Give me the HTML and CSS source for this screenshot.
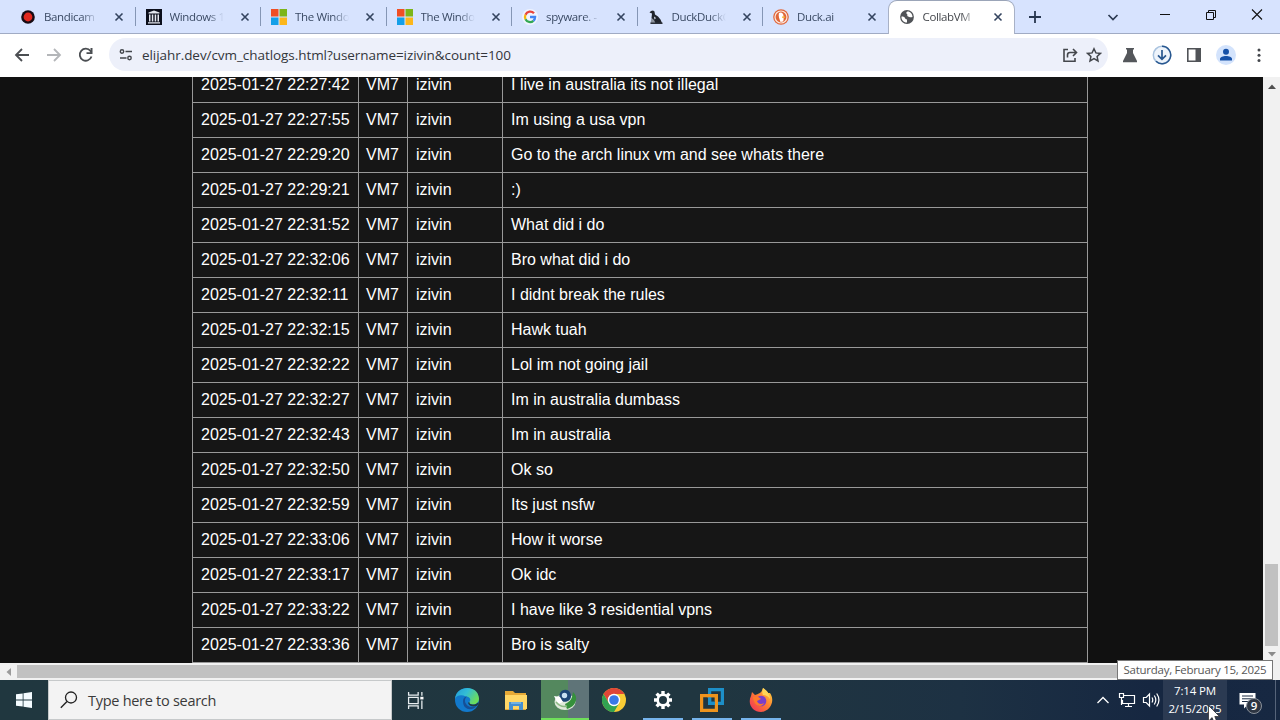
FILE: index.html
```
<!DOCTYPE html>
<html lang="en">
<head>
  <meta charset="UTF-8">
  <meta name="viewport" content="width=device-width, initial-scale=1.0">
  <title>CollabVM Chat Logs</title>
  <link rel="stylesheet" href="styles.css">
</head>
<body>
  <svg class="defs" width="0" height="0">
    <symbol id="close" viewBox="0 0 10 10"><path d="M1.5 1.5l7 7M8.5 1.5l-7 7" fill="none" stroke="currentColor" stroke-width="1.6"/></symbol>
    <symbol id="microsoft" viewBox="0 0 16 16"><path d="M0 0h7.5v7.5H0z" fill="#f04e23"/><path d="M8.5 0H16v7.5H8.5z" fill="#7cb518"/><path d="M0 8.5h7.5V16H0z" fill="#149fe8"/><path d="M8.5 8.5H16V16H8.5z" fill="#fcb61a"/></symbol>
  </svg>

  <header class="tabstrip">
    <div class="tab">
      <svg class="favicon" viewBox="0 0 16 16"><circle cx="8" cy="8" r="6.8" fill="#180c14"/><circle cx="8" cy="8" r="4.4" fill="#e3291f"/></svg>
      <span class="title">Bandicam</span><svg class="close"><use href="#close"/></svg>
    </div>
    <div class="tab">
      <svg class="favicon" viewBox="0 0 16 16"><path d="M0 0h16v16H0z" fill="#0c0f1c"/><path d="M8 1.5l5.500 2v1h-11v-1zM3 5.500h1.500v7H3zM5.800 5.500h1.500v7H5.800zM8.700 5.500h1.500v7H8.700zM11.500 5.500H13v7h-1.500zM2 13.300h12v1.300H2z" fill="#e4e8f0"/></svg>
      <span class="title">Windows 1</span><svg class="close"><use href="#close"/></svg>
    </div>
    <div class="tab">
      <svg class="favicon"><use href="#microsoft"/></svg>
      <span class="title">The Windo</span><svg class="close"><use href="#close"/></svg>
    </div>
    <div class="tab">
      <svg class="favicon"><use href="#microsoft"/></svg>
      <span class="title">The Windo</span><svg class="close"><use href="#close"/></svg>
    </div>
    <div class="tab">
      <svg class="favicon" viewBox="0 0 16 16"><circle cx="8" cy="8" r="8" fill="#fff" opacity=".6"/><g fill="none" stroke-width="2.300"><path d="M12 4.300A5.100 5.100 0 0 0 3.500 5.700" stroke="#e8453c"/><path d="M3.500 5.700a5.100 5.100 0 0 0 0 4.600" stroke="#f6b70c"/><path d="M3.500 10.300a5.100 5.100 0 0 0 7.900 1.500" stroke="#34a853"/><path d="M11.400 11.800A5.100 5.100 0 0 0 13.100 8H8" stroke="#4285f4"/></g></svg>
      <span class="title">spyware. -</span><svg class="close"><use href="#close"/></svg>
    </div>
    <div class="tab">
      <svg class="favicon" viewBox="0 0 16 16"><path d="M1.500 3.500L3 2l2-.500 1.500 1L7 5.500l3 2 2.500 3 1.500 3.500H7l-2-3-1.500-2 .500-4.500z" fill="#20242c"/><path d="M3.500 9l2.500 2 1.500 3.500h-5z" fill="#8d939e"/><path d="M6 7.500l2 1.500-1.500 1.500z" fill="#dde3f2"/><path d="M2.500 13.500h12V15h-12z" fill="#2b303a"/></svg>
      <span class="title">DuckDuckG</span><svg class="close"><use href="#close"/></svg>
    </div>
    <div class="tab no-sep">
      <svg class="favicon" viewBox="0 0 16 16"><circle cx="8" cy="8" r="7.800" fill="#e0663a"/><circle cx="8" cy="8" r="6" fill="none" stroke="#fbe6dc" stroke-width="1.200"/><path d="M6 4c2-1.500 4.500 0 4.500 3 0 2 .500 4-.500 5.500L7.500 13C6.500 10 5 7 6 4z" fill="#fff"/><path d="M9 7.500h3v1.300H9z" fill="#f7b52d"/></svg>
      <span class="title">Duck.ai</span><svg class="close"><use href="#close"/></svg>
    </div>
    <div class="tab active">
      <svg class="favicon" viewBox="0 0 16 16"><circle cx="8" cy="8" r="6.900" fill="#505357"/><path d="M2.500 7.500c2 0 3.500.500 4 2.500l1.500.500v3c-3 .300-6-2.500-5.500-6zM8.500 2.500c-1.500.500-1.500 2-.500 2.500s-.500 2 1 2.500 2 1 4.500.500c0-3-2-5.500-5-5.500z" fill="#fff"/></svg>
      <span class="title">CollabVM</span><svg class="close"><use href="#close"/></svg>
    </div>
    <svg class="new-tab" viewBox="0 0 12 12"><path d="M6 0v12M0 6h12" stroke="#27364f" stroke-width="1.800"/></svg>
    <div class="window-buttons">
      <svg viewBox="0 0 12 12"><path d="M1.500 4L6 8.500 10.500 4" fill="none" stroke="#2c3a52" stroke-width="1.700"/></svg>
      <svg viewBox="0 0 12 12"><path d="M1 5.500h10" stroke="#111"/></svg>
      <svg viewBox="0 0 12 12"><path d="M1.500 3.500h7v7h-7zM3.500 3.500v-2h7v7h-2" fill="none" stroke="#111"/></svg>
      <svg viewBox="0 0 12 12"><path d="M1 .500l10 10M11 .500l-10 10" stroke="#111" stroke-width="1.100"/></svg>
    </div>
  </header>

  <nav class="toolbar">
    <div class="nav-buttons">
      <svg viewBox="0 0 16 16"><path d="M15 8H2M8 2L2 8l6 6" fill="none" stroke="#4b4e52" stroke-width="1.800"/></svg>
      <svg viewBox="0 0 16 16"><path d="M1 8h13M8 2l6 6-6 6" fill="none" stroke="#b4b6b9" stroke-width="1.800"/></svg>
      <svg viewBox="0 0 16 16"><path d="M13.500 9.500A6 6 0 1 1 12.500 4l1 1.500" fill="none" stroke="#4b4e52" stroke-width="1.800"/><path d="M14.500 1v6h-6V5.200h4V1z" fill="#4b4e52"/></svg>
    </div>
    <div class="omnibox">
      <svg class="site-info" viewBox="0 0 14 14"><g fill="none" stroke="#44474c" stroke-width="1.400"><circle cx="3" cy="3.500" r="1.700"/><path d="M6.500 3.500H13M1 10h6.500"/><circle cx="10.500" cy="10" r="1.700"/></g></svg>
      <span class="url">elijahr.dev/cvm_chatlogs.html?username=izivin&amp;count=100</span>
      <svg class="box-icon" viewBox="0 0 16 16"><path d="M6 2.500H2v11.700h11V11M5.500 10.500V8q0-2.500 2.500-2.500h6M11 2l3.500 3.500L11 9" fill="none" stroke="#44474c" stroke-width="1.600"/></svg>
      <svg class="box-icon" viewBox="0 0 16 16"><path d="M8 1.800l1.900 4.100 4.500.500-3.300 3.100.900 4.500-4-2.300L4 14l.900-4.500L1.600 6.400l4.500-.500z" fill="none" stroke="#44474c" stroke-width="1.500"/></svg>
    </div>
    <div class="actions">
      <svg viewBox="0 0 16 16"><path d="M4 1h8v1.500h-1V6l4 8v1.200H1V14l4-8V2.500H4z" fill="#54575b"/></svg>
      <svg class="download" viewBox="0 0 20 20"><circle cx="10" cy="10" r="8.700" fill="#eef4fb" stroke="#a9c3df" stroke-width="1.500"/><path d="M10 1.300a8.700 8.700 0 1 1-6 15" fill="none" stroke="#28578f" stroke-width="1.500"/><path d="M10 5v9M6 10.300l4 4 4-4" fill="none" stroke="#28578f" stroke-width="1.700"/></svg>
      <svg viewBox="0 0 16 16"><path d="M1.800 1.800h12.400v12.400H1.800z" fill="none" stroke="#505357" stroke-width="1.600"/><path d="M9.500 2H14v12H9.500z" fill="#505357"/></svg>
      <svg class="avatar" viewBox="0 0 20 20"><circle cx="10" cy="10" r="10" fill="#d3e3fc"/><circle cx="10" cy="6.700" r="3" fill="#1450a8"/><path d="M4 15.500v-1.500c0-4 12-4 12 0v1.500z" fill="#1450a8"/></svg>
      <svg viewBox="0 0 16 16"><g fill="#44474c"><circle cx="8" cy="3" r="1.500"/><circle cx="8" cy="8.200" r="1.500"/><circle cx="8" cy="13.400" r="1.500"/></g></svg>
    </div>
  </nav>

  <main class="viewport">
    <div class="page">
      <table>
        <colgroup><col class="col-time"><col class="col-vm"><col class="col-user"><col></colgroup>
        <tr><td>2025-01-27 22:27:42</td><td>VM7</td><td>izivin</td><td>I live in australia its not illegal</td></tr>
        <tr><td>2025-01-27 22:27:55</td><td>VM7</td><td>izivin</td><td>Im using a usa vpn</td></tr>
        <tr><td>2025-01-27 22:29:20</td><td>VM7</td><td>izivin</td><td>Go to the arch linux vm and see whats there</td></tr>
        <tr><td>2025-01-27 22:29:21</td><td>VM7</td><td>izivin</td><td>:)</td></tr>
        <tr><td>2025-01-27 22:31:52</td><td>VM7</td><td>izivin</td><td>What did i do</td></tr>
        <tr><td>2025-01-27 22:32:06</td><td>VM7</td><td>izivin</td><td>Bro what did i do</td></tr>
        <tr><td>2025-01-27 22:32:11</td><td>VM7</td><td>izivin</td><td>I didnt break the rules</td></tr>
        <tr><td>2025-01-27 22:32:15</td><td>VM7</td><td>izivin</td><td>Hawk tuah</td></tr>
        <tr><td>2025-01-27 22:32:22</td><td>VM7</td><td>izivin</td><td>Lol im not going jail</td></tr>
        <tr><td>2025-01-27 22:32:27</td><td>VM7</td><td>izivin</td><td>Im in australia dumbass</td></tr>
        <tr><td>2025-01-27 22:32:43</td><td>VM7</td><td>izivin</td><td>Im in australia</td></tr>
        <tr><td>2025-01-27 22:32:50</td><td>VM7</td><td>izivin</td><td>Ok so</td></tr>
        <tr><td>2025-01-27 22:32:59</td><td>VM7</td><td>izivin</td><td>Its just nsfw</td></tr>
        <tr><td>2025-01-27 22:33:06</td><td>VM7</td><td>izivin</td><td>How it worse</td></tr>
        <tr><td>2025-01-27 22:33:17</td><td>VM7</td><td>izivin</td><td>Ok idc</td></tr>
        <tr><td>2025-01-27 22:33:22</td><td>VM7</td><td>izivin</td><td>I have like 3 residential vpns</td></tr>
        <tr><td>2025-01-27 22:33:36</td><td>VM7</td><td>izivin</td><td>Bro is salty</td></tr>
      </table>
    </div>
    <div class="scroll-y">
      <svg viewBox="0 0 8 5"><path d="M0 5l4-4.500L8 5z" fill="#505050"/></svg>
      <div class="thumb-y"></div>
      <svg viewBox="0 0 8 5"><path d="M0 0h8L4 4.500z" fill="#8b8b8b"/></svg>
    </div>
  </main>
  <div class="scroll-x">
    <svg viewBox="0 0 5 8"><path d="M5 0v8L.500 4z" fill="#9b9b9b"/></svg>
    <div class="thumb-x"></div>
  </div>

  <footer class="taskbar">
    <div class="start">
      <svg viewBox="0 0 16 16"><path d="M0 2.300l6.700-.900v6.200H0zM7.500 1.300L16 0v7.600H7.500zM0 8.400h6.700v6.200L0 13.700zM7.500 8.400H16V16l-8.500-1.200z" fill="#f4fbff"/></svg>
    </div>
    <div class="search">
      <svg viewBox="0 0 18 18"><circle cx="11" cy="6.500" r="5.500" fill="none" stroke="#222" stroke-width="1.300"/><path d="M7 10.500L.800 16.700" stroke="#222" stroke-width="1.400"/></svg>
      <span>Type here to search</span>
    </div>
    <div class="apps">
      <div class="app task-view"><svg class="small" viewBox="0 0 16 16"><path d="M1.500 0v3h9V0M1.500 16v-3h9v3M1.500 5h9v6h-9zM14 0v3.500M14 8v8" fill="none" stroke="#e8eef0" stroke-width="1.200"/><path d="M12.500 4.500h3v2.500h-3z" fill="#fff"/></svg></div>
      <div class="app"><svg viewBox="0 0 24 24">
        <defs><linearGradient id="edge" x1="0" y1="0" x2="1" y2=".500"><stop offset="0" stop-color="#229bd9"/><stop offset=".5" stop-color="#33bdd5"/><stop offset="1" stop-color="#6cdc5b"/></linearGradient></defs>
        <circle cx="12" cy="12" r="12" fill="#1279cc"/>
        <path d="M0 11C1-3 23-4 24 10.500c0 4-3 6-6.500 6-3 0-4-1-3-2.500 2-3 0-5.500-3.500-5.500C5.500 6 1 8 0 11z" fill="url(#edge)"/>
        <path d="M8 13c0-3 2-4.500 4-4.500-4 2.500-2 10.500 5 10.500 2 0 3.500-.500 5-1.500-3 5-14 6-14-4.500z" fill="#164f96"/>
        <path d="M14.500 14c-.600 1.500 1 2.500 3.200 2.600 2.300 0 4-.700 5.500-2.300l.300 1.500-1.500 2c-3.500 1.500-8.500.500-9-3z" fill="#203745"/>
      </svg></div>
      <div class="app"><svg viewBox="0 0 24 24"><path d="M1 3h8l2 2h11v17H1z" fill="#e6a936"/><path d="M1 7h22v14H1z" fill="#ffd766"/><path d="M5 22v-8h14v8h-4v-4H9v4z" fill="#4690d0"/><path d="M7 15h10" stroke="#81bce8" stroke-width="1.500"/></svg></div>
      <div class="app current"><svg viewBox="0 0 24 24">
        <ellipse cx="12" cy="15" rx="10.500" ry="8" fill="#dfe9da"/><path d="M14 22c9-2 12-12 6-17-1 7-2 9-8 12z" fill="#35903b"/><path d="M7 6C10 1 17 2 18 8c1 6-7 9-10 5-2-2-2-5-1-7z" fill="#1e4676"/><circle cx="11.500" cy="8.500" r="2.700" fill="#c9e0f2"/><path d="M1 9l6 1 3 5-5 2z" fill="#fff"/><path d="M3 15q5 6 11 4" fill="none" stroke="#8cb984" stroke-width="1.500"/>
      </svg></div>
      <div class="app"><svg viewBox="0 0 24 24"><circle cx="12" cy="12" r="12" fill="#f9cc35"/><path d="M1.600 6A12 12 0 0 1 22.400 6H12l-5.200 9z" fill="#df4637"/><path d="M1.600 6A12 12 0 0 0 12 24l5.200-9-5.200 3-5.200-3z" fill="#31a352"/><circle cx="12" cy="12" r="6.200" fill="#fff"/><circle cx="12" cy="12" r="4.800" fill="#3978e7"/></svg></div>
      <div class="app open"><svg class="gear" viewBox="0 0 20 20"><circle cx="10" cy="10" r="5.300" fill="none" stroke="#fff" stroke-width="2.600"/><path d="M10 1v3M10 16v3M1 10h3M16 10h3M3.600 3.600l2.200 2.200M14.200 14.200l2.200 2.200M16.400 3.600l-2.200 2.200M5.800 14.200l-2.200 2.200" stroke="#fff" stroke-width="3.400"/></svg></div>
      <div class="app open"><svg viewBox="0 0 24 24"><g fill="none" stroke-width="3.200"><path d="M9.600 1.600h12.800v13.800H9.600z" stroke="#1d8fc8"/><path d="M1.600 7.600h14.800v14.800H1.600z" stroke="#ef941d"/><path d="M9.600 6v9.400H15" stroke="#1d8fc8"/><path d="M7 7.600h9.400V13" stroke="#ef941d"/></g></svg></div>
      <div class="app open"><svg viewBox="0 0 24 24">
        <defs><linearGradient id="fox" x1="1" y1="0" x2="0" y2="1"><stop offset="0" stop-color="#ffdf43"/><stop offset=".45" stop-color="#ff8030"/><stop offset="1" stop-color="#ef2b5c"/></linearGradient></defs>
        <path d="M3 4l3 3 3-1c2-1 4-2 5-6 2 2 4 3 5 5l2 0c6 9-1 19-9 19S-2 16 2 8z" fill="url(#fox)"/><circle cx="12" cy="13" r="5.300" fill="#7a3ecb"/><path d="M4 9c4-1 6 0 8 2l-4 2c1 3 4 4 7 2-2 5-10 4-11-6z" fill="#ff7a2b"/><path d="M14 0c3 2 7 5 7 11-2-3-4-4-7-4-1-2-1-4 0-7z" fill="#ffd557"/>
      </svg></div>
    </div>
    <div class="tray">
      <svg class="chevron" viewBox="0 0 14 14"><path d="M1.500 10L7 4.500l5.500 5.500" fill="none" stroke="#fff" stroke-width="1.300"/></svg>
      <svg class="network" viewBox="0 0 18 16"><path d="M6 3.500h10.500v8H4.500V8M10.500 11.500v3M7 14.500h7M1.500 1.500h4v4h-4zM3.500 5.500v7.500" fill="none" stroke="#fff" stroke-width="1.200"/></svg>
      <svg class="volume" viewBox="0 0 18 16"><path d="M1.500 5.500h2.700L7.500 2v12l-3.300-3.500H1.500zM10 5.500q1.500 2.500 0 5M12.300 3.500q3 4.500 0 9M14.700 1.500q4.500 6.500 0 13" fill="none" stroke="#fff" stroke-width="1.200"/></svg>
      <div class="clock"><span>7:14 PM</span><span>2/15/2025</span></div>
      <div class="notifications">
        <svg viewBox="0 0 17 17"><path d="M.500 1h16v11.500H9L5 16.500v-4H.500z" fill="#fff"/><path d="M3 4h11M3 6.800h11M3 9.500h7" stroke="#1a2b42" stroke-width="1"/></svg>
        <span class="badge">9</span>
      </div>
      <div class="show-desktop"></div>
    </div>
  </footer>

  <div class="tooltip">Saturday, February 15, 2025</div>
  <svg class="cursor" viewBox="0 0 12 19"><path d="M.500.500v15.500l3.600-3.400 2.300 5.500 2.600-1.100L6.800 11.500h4.700z" fill="#fff" stroke="#222" stroke-width=".7"/></svg>
</body>
</html>
```
FILE: styles.css
```
* {
  box-sizing: border-box;
}

body {
  margin: 0;
  width: 1280px;
  height: 720px;
  overflow: hidden;
  position: relative;
  display: flex;
  flex-direction: column;
  background: #111;
  font-family: "Open Sans", "Noto Sans", sans-serif;
}

svg {
  display: block;
  flex: none;
}

.defs {
  position: absolute;
}

/* tabs */
.tabstrip {
  display: flex;
  height: 34px;
  flex: none;
  padding-left: 10px;
  background: #d7e3fe;
  border-bottom: 1px solid #a0abc4;
}

.tab {
  display: flex;
  align-items: center;
  width: 125.5px;
  flex: none;
  height: 33px;
  padding: 0 10px;
  color: #3a4a64;
  background: linear-gradient(#8596b5, #8596b5) right 0 center / 1px 19px no-repeat;
}

.tab.no-sep {
  background: none;
}

.tab.active {
  height: 33px;
  margin-top: 1px;
  padding-bottom: 1px;
  background: #fff;
  color: #45484d;
  border-radius: 8px 8px 0 0;
  box-shadow: 0 -1px 0 #9ba5b8, 1px 0 0 #a8b1c6, -1px 0 0 #a8b1c6;
}

.favicon {
  width: 16px;
  height: 16px;
}

.title {
  width: 54px;
  margin: 0 0 1px 8px;
  white-space: nowrap;
  font-size: 11.5px;
  letter-spacing: -0.35px;
  -webkit-mask-image: linear-gradient(90deg, #000 70%, transparent);
  mask-image: linear-gradient(90deg, #000 70%, transparent);
}

.close {
  width: 10px;
  height: 10px;
  margin-left: 16px;
  color: #34445f;
}

.new-tab {
  width: 12px;
  height: 12px;
  margin: 11px 0 0 15px;
}

.window-buttons {
  display: flex;
  gap: 34px;
  margin: 9px 0 0 66px;
}

.window-buttons svg {
  width: 12px;
  height: 12px;
}

.window-buttons svg:first-child {
  margin: 2px 6px 0 0;
}

/* toolbar */
.toolbar {
  display: flex;
  align-items: center;
  height: 43px;
  flex: none;
  padding-bottom: 2px;
  background: #fff;
}

.nav-buttons {
  display: flex;
  gap: 16px;
  width: 109px;
  padding-left: 14px;
}

.nav-buttons svg,
.box-icon,
.actions svg {
  width: 16px;
  height: 16px;
}

.omnibox {
  display: flex;
  align-items: center;
  width: 999px;
  height: 33px;
  padding: 0 6px 0 10px;
  border-radius: 17px;
  background: #edf0fa;
}

.site-info {
  width: 14px;
  height: 14px;
}

.url {
  flex: 1;
  margin-left: 9px;
  font-size: 13.5px;
  letter-spacing: -0.06px;
  color: #33363b;
  white-space: nowrap;
}

.box-icon + .box-icon {
  margin-left: 8px;
}

.actions {
  display: flex;
  align-items: center;
  gap: 15px;
  padding-left: 14px;
}

.actions .download,
.actions .avatar {
  width: 20px;
  height: 20px;
}

.actions .download {
  margin: 0 -1px;
}

.actions svg:nth-child(3) {
  margin-right: -1px;
}

/* page */
.viewport {
  display: flex;
  height: 586px;
  flex: none;
}

.page {
  display: flex;
  flex-direction: column;
  justify-content: flex-end;
  width: 1263px;
  overflow: hidden;
  background: #111;
}

table {
  width: 896px;
  flex: none;
  margin-left: 192px;
  table-layout: fixed;
  border-collapse: collapse;
  background: #161616;
  color: #fff;
  font: 16px/18px "Liberation Sans", Arial, sans-serif;
}

td {
  height: 35px;
  padding: 8px;
  border: 1px solid #999;
  white-space: nowrap;
}

td:nth-child(2) {
  padding: 8px 7px;
}

.col-time {
  width: 166px;
}

.col-vm {
  width: 49px;
}

.col-user {
  width: 95px;
}

.scroll-y {
  display: flex;
  flex-direction: column;
  align-items: center;
  justify-content: flex-end;
  width: 17px;
  padding-bottom: 6px;
  background: #f1f1f1;
}

.scroll-y svg {
  width: 8px;
  height: 5px;
}

.scroll-y svg:first-child {
  margin-bottom: auto;
  margin-top: 7px;
}

.thumb-y {
  width: 13px;
  height: 82px;
  margin-bottom: 6px;
  background: #c1c1c1;
}

.scroll-x {
  display: flex;
  align-items: center;
  height: 17px;
  flex: none;
  padding: 0 0 0 6px;
  background: #f1f1f1;
}

.scroll-x svg {
  width: 5px;
  height: 8px;
}

.thumb-x {
  width: 1220px;
  height: 13px;
  margin-left: 6px;
  background: #c1c1c1;
}

/* taskbar */
.taskbar {
  display: flex;
  height: 40px;
  flex: none;
  background: linear-gradient(90deg, #20373f 0, #203640 55%, #1d3143 75%, #162741 90%, #172842 100%);
}

.start {
  display: flex;
  align-items: center;
  justify-content: center;
  width: 48px;
}

.start svg {
  width: 16px;
  height: 16px;
}

.search {
  display: flex;
  align-items: center;
  width: 344px;
  padding-left: 11px;
  background: #f3f3f3;
  border: 1px solid #c6c9ca;
  color: #3a3a3a;
  font-size: 14.5px;
  letter-spacing: -0.28px;
}

.search svg {
  width: 18px;
  height: 18px;
}

.search span {
  margin-left: 10px;
  white-space: nowrap;
}

.apps {
  display: flex;
  gap: 1px;
}

.app {
  display: flex;
  align-items: center;
  justify-content: center;
  width: 48px;
  height: 40px;
}

.app.task-view {
  margin-right: 2px;
  padding-right: 2px;
}

.app svg {
  width: 24px;
  height: 24px;
}

.app .small {
  width: 17px;
  height: 17px;
}

.app .gear {
  width: 20px;
  height: 20px;
}

.app.current {
  background: linear-gradient(90deg, #54885e 56%, #5f7478 56%);
  border-bottom: 2px solid #6fe05a;
}

.app.open {
  background: linear-gradient(#76b4ec, #76b4ec) center bottom / 40px 2px no-repeat;
}

.tray {
  display: flex;
  align-items: center;
  margin-left: auto;
  color: #fff;
}

.chevron {
  width: 14px;
  height: 14px;
}

.network,
.volume {
  width: 18px;
  height: 16px;
}

.network {
  margin-left: 8px;
}

.volume {
  margin: 0 3px 0 6px;
}

.clock {
  display: flex;
  flex-direction: column;
  align-items: center;
  justify-content: center;
  gap: 1px;
  width: 64px;
  height: 40px;
  padding-bottom: 2px;
  background: #2b3a52;
  font-size: 11.5px;
  line-height: 17px;
  letter-spacing: -0.15px;
}

.notifications {
  position: relative;
  width: 48px;
  padding-left: 12px;
}

.notifications svg {
  width: 17px;
  height: 17px;
}

.badge {
  position: absolute;
  left: 19px;
  top: 6px;
  width: 16px;
  height: 16px;
  border: 1px solid #8b929c;
  border-radius: 50%;
  background: #2d3542;
  font-size: 11.5px;
  font-weight: 600;
  line-height: 14px;
  text-align: center;
}

.show-desktop {
  width: 5px;
  height: 40px;
  border-left: 1px solid #56647a;
}

.tooltip {
  position: absolute;
  left: 1117px;
  top: 660px;
  width: 156px;
  height: 20px;
  border: 1px solid #777;
  background: #fff;
  color: #575757;
  font-size: 11.5px;
  letter-spacing: -0.27px;
  line-height: 18px;
  text-align: center;
  white-space: nowrap;
}

.cursor {
  position: absolute;
  left: 1208px;
  top: 705px;
  width: 12px;
  height: 19px;
}
```
